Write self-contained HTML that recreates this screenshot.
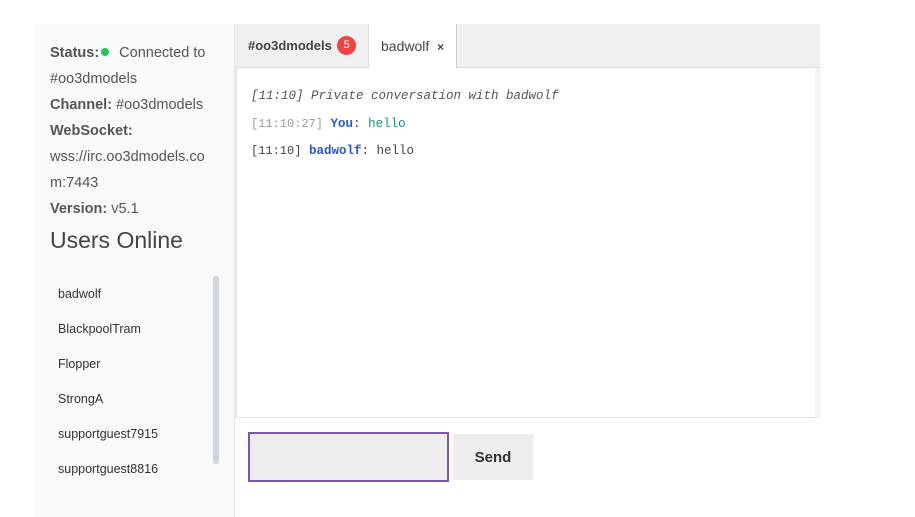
<!DOCTYPE html>
<html><head><style>
body{margin:0;width:915px;height:517px;background:#fff;font-family:"Liberation Sans",sans-serif;position:relative;overflow:hidden}
.side{position:absolute;left:35px;top:24px;width:199px;height:493px;background:#f8f9fb;border-right:1px solid #e3e6ea}
.info{position:absolute;left:15px;top:16px;font-size:14.5px;color:#555;line-height:26px;width:178px}
.info b{color:#555}
.dot{display:inline-block;width:8px;height:8px;border-radius:50%;background:#22c55e;margin:0 6px 1px 2px}
h2{position:absolute;left:15px;top:203px;margin:0;font-weight:normal;font-size:23px;color:#444}
.users{position:absolute;left:23px;top:263px;font-size:12.5px;color:#333}
.users div{height:35px}
.sb{position:absolute;left:178px;top:252px;width:6px;height:188px;background:#cdd5e0;border-radius:3px}
.tabs{position:absolute;left:235px;top:24px;width:585px;height:43px;background:#f0f0f0;border-bottom:1px solid #ddd}
.t1{position:absolute;left:13px;top:14px;font-size:13px;font-weight:bold;color:#444}
.badge{position:absolute;left:102px;top:12px;width:19px;height:19px;border-radius:50%;background:#ef4444;color:#fff;font-size:11px;text-align:center;line-height:19px}
.t2{position:absolute;left:133px;top:0;width:89px;height:44px;background:#fff;border-left:1px solid #ddd;border-right:1px solid #ccc;font-size:14px;color:#444;line-height:44px;padding-left:12px;box-sizing:border-box}
.chat{position:absolute;left:235px;top:68px;width:586px;height:350px;border:1px solid #dde3ea;border-top:none;border-left:2px solid #e3e6ea;border-right:6px solid #f3f4f6;box-sizing:border-box;font-family:"Liberation Mono",monospace;font-size:12.5px;color:#444}
.chat div{position:absolute;left:14px;white-space:pre}
.in{position:absolute;left:248px;top:432px;width:201px;height:50px;box-sizing:border-box;border:2px solid #7e57b0;background:#ededed}
.send{position:absolute;left:453px;top:434px;width:80px;height:46px;background:#ededed;font-weight:bold;font-size:15px;color:#333;text-align:center;line-height:46px;padding-top:1px;box-sizing:border-box}
</style></head><body>
<div class="side">
<div class="info"><b>Status:</b><span class="dot"></span> Connected to #oo3dmodels<br><b>Channel:</b> #oo3dmodels<br><b>WebSocket:</b><br>wss://irc.oo3dmodels.co<br>m:7443<br><b>Version:</b> v5.1</div>
<h2>Users Online</h2>
<div class="sb"></div>
<div class="users"><div>badwolf</div><div>BlackpoolTram</div><div>Flopper</div><div>StrongA</div><div>supportguest7915</div><div>supportguest8816</div></div>
</div>
<div class="tabs"><span class="t1">#oo3dmodels</span><span class="badge">5</span><div class="t2">badwolf <b style="font-size:12px;margin-left:4px">×</b></div></div>
<div class="chat">
<div style="top:21px;font-style:italic;color:#555">[11:10] Private conversation with badwolf</div>
<div style="top:49px"><span style="color:#999;font-size:12px">[11:10:27]</span> <b style="color:#2b55d6">You</b>: <span style="color:#14957f">hello</span></div>
<div style="top:76px"><span style="font-size:12px">[11:10]</span> <b style="color:#2b55d6">badwolf</b>: hello</div>
</div>
<div class="in"></div>
<div class="send">Send</div>
</body></html>
